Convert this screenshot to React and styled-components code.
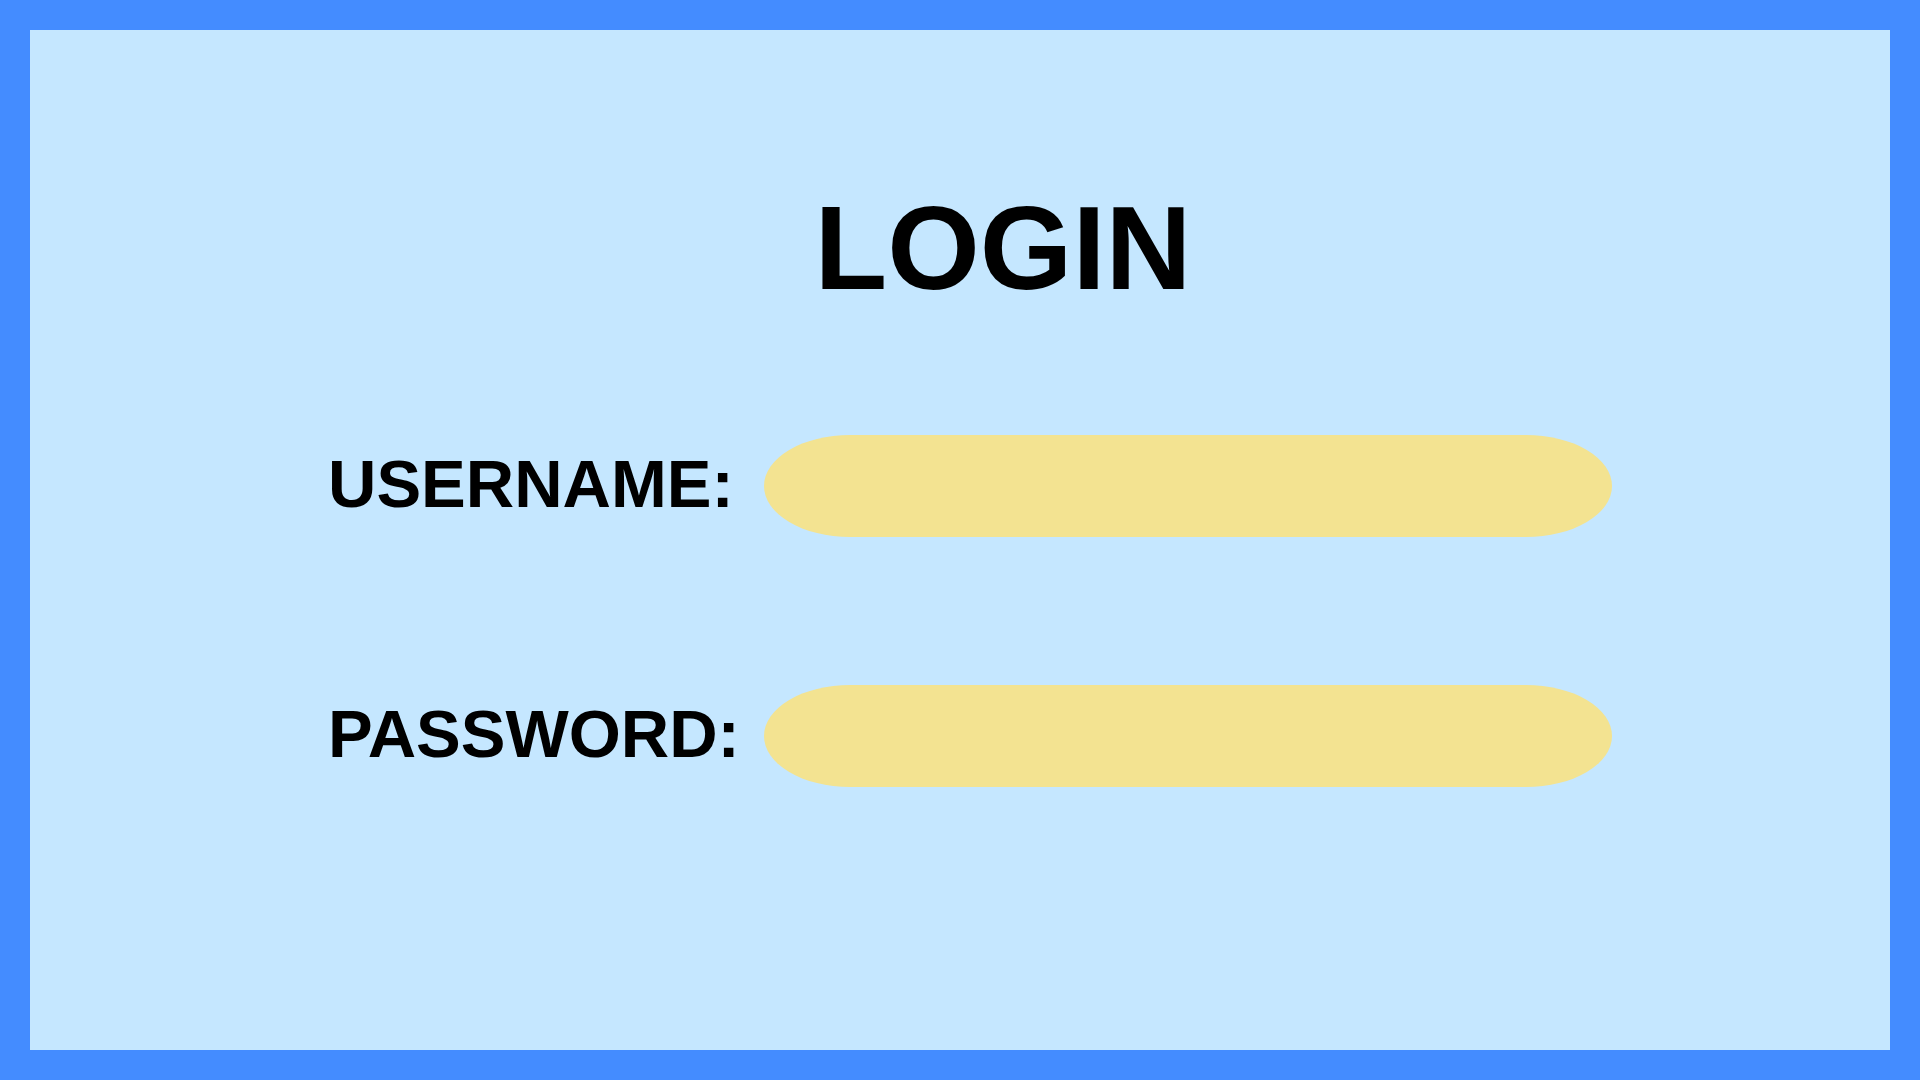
import React from "react";
import styled, { createGlobalStyle } from "styled-components";

const Global = createGlobalStyle`
  html, body { margin: 0; padding: 0; }
  body { font-family: "Liberation Sans", Arial, sans-serif; }
  * { box-sizing: border-box; }
`;

const Frame = styled.div`
  width: 1920px;
  height: 1080px;
  padding: 30px;
  background: #448cff;
`;

const Panel = styled.main`
  width: 100%;
  height: 100%;
  background: #c5e7ff;
  padding: 158px 0 0 298px;
`;

const Form = styled.form`
  display: grid;
  grid-template-columns: 412px 848px;
  column-gap: 24px;
  row-gap: 148px;
  align-items: center;
  width: max-content;
`;

const Title = styled.h1`
  grid-column: 1 / -1;
  justify-self: center;
  margin: 0 0 -20px 0;
  padding-left: 66px;
  font-family: "Liberation Sans", Arial, sans-serif;
  font-weight: 700;
  font-size: 119px;
  line-height: 119px;
  color: #000;
`;

const Label = styled.label`
  font-family: "Liberation Sans", Arial, sans-serif;
  font-weight: 700;
  font-size: 67px;
  line-height: 1;
  color: #000;
  white-space: nowrap;
  justify-self: start;
  transform: translateY(-3px);
`;

const Field = styled.input`
  width: 848px;
  height: 102px;
  border: none;
  outline: none;
  background: #f3e391;
  border-radius: 86px / 51px;
  padding: 0 60px;
  font-family: "Liberation Sans", Arial, sans-serif;
  font-size: 40px;
  color: #000;
`;

export default function App() {
  return (
    <>
      <Global />
      <Frame>
        <Panel>
          <Form onSubmit={(e) => e.preventDefault()}>
            <Title>LOGIN</Title>
            <Label htmlFor="username">USERNAME:</Label>
            <Field id="username" type="text" />
            <Label htmlFor="password">PASSWORD:</Label>
            <Field id="password" type="password" />
          </Form>
        </Panel>
      </Frame>
    </>
  );
}
